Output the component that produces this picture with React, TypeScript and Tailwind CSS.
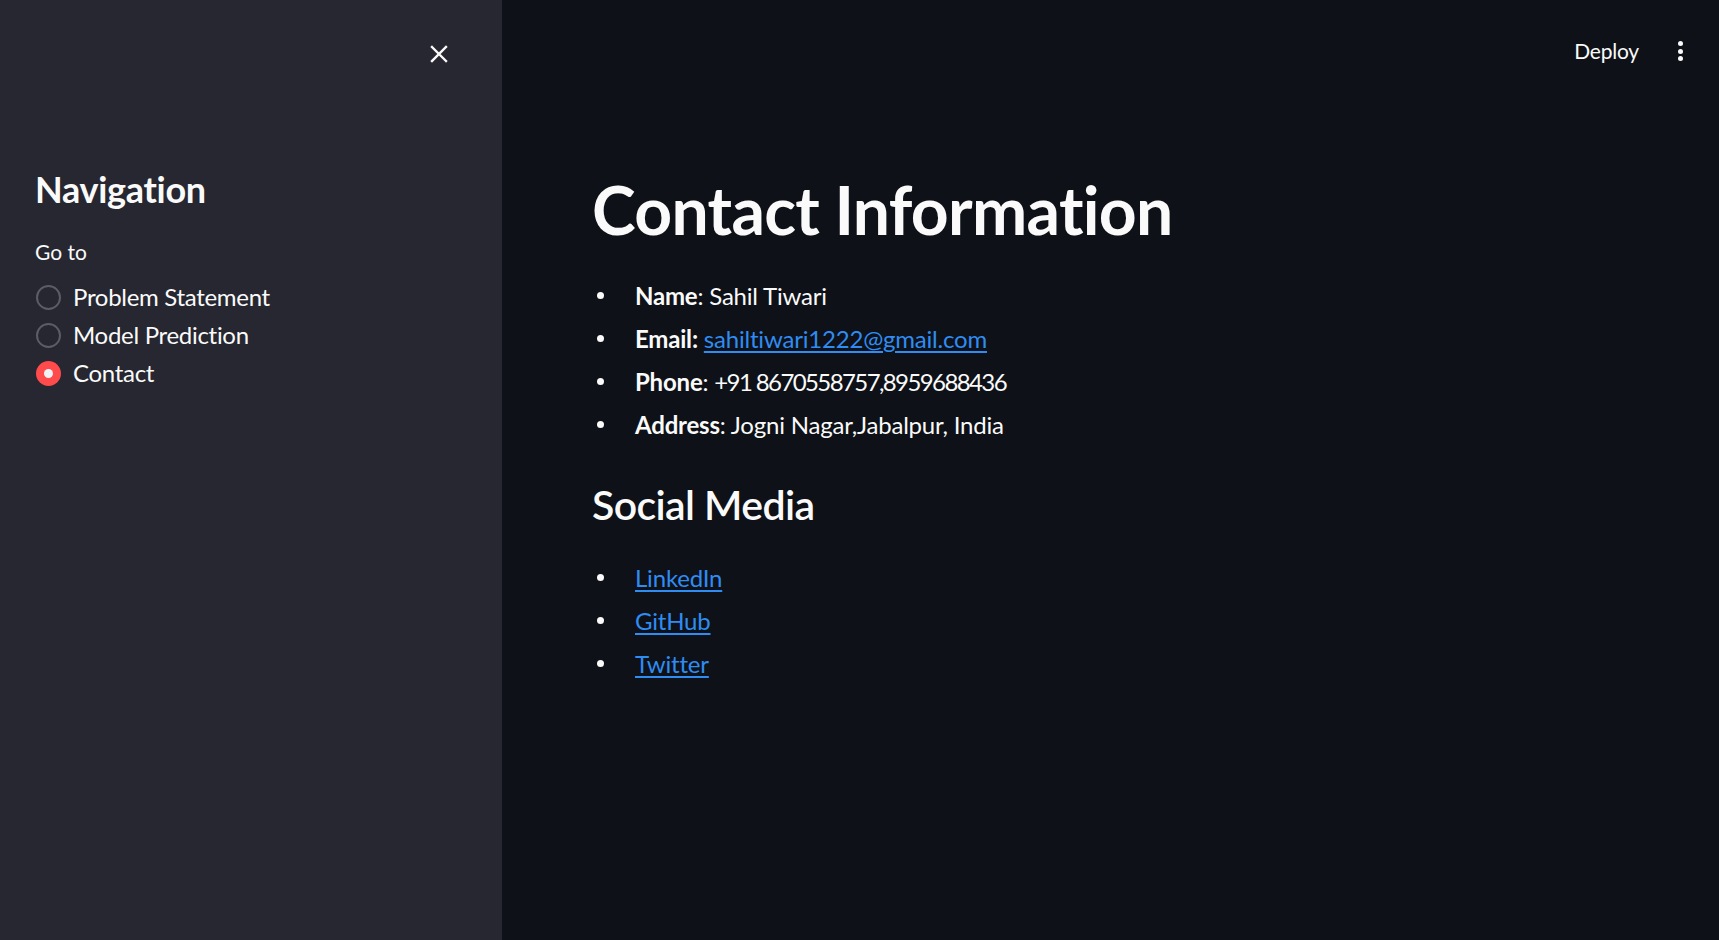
import React, { useState } from 'react';

const font = "font-['Lato','Noto_Sans',sans-serif]";

const pages = ['Problem Statement', 'Model Prediction', 'Contact'];

const Bullet: React.FC<{ children: React.ReactNode }> = ({ children }) => (
  <li className="flex items-center h-[43px]">
    <span className="w-[43px] shrink-0 flex pl-[5px]">
      <span className="w-[7px] h-[7px] rounded-full bg-[#fafafa]" />
    </span>
    <span className="text-[24px] leading-[43px] tracking-[-0.2px]">{children}</span>
  </li>
);

const Link: React.FC<{ children: React.ReactNode }> = ({ children }) => (
  <a href="#" className="text-[#2f8cf2] underline underline-offset-[3px] decoration-[1.5px]">
    {children}
  </a>
);

export default function App() {
  const [page, setPage] = useState('Contact');

  return (
    <div className={`flex h-[940px] w-full overflow-hidden text-[#fafafa] ${font}`}>
      {/* sidebar */}
      <aside className="w-[502px] shrink-0 bg-[#262730] flex flex-col">
        <div className="h-[108px] flex justify-end items-start pt-[45px] pr-[54px]">
          <button className="w-[18px] h-[18px] text-[#fafafa]">
            <svg viewBox="0 0 18 18" width="18" height="18" fill="none" stroke="currentColor" strokeWidth="2.4" strokeLinecap="square">
              <path d="M2 2 L16 16 M16 2 L2 16" />
            </svg>
          </button>
        </div>
        <div className="pl-[35px] pt-[59px]">
          <h2 className="text-[36px] leading-[44px] font-bold tracking-[-0.3px]">Navigation</h2>
          <div className="mt-[26px] text-[21px] leading-[30px]">Go to</div>
          <div className="mt-[11px] flex flex-col">
            {pages.map(p => {
              const active = p === page;
              return (
                <label key={p} onClick={() => setPage(p)} className="flex items-center h-[38px] cursor-pointer pl-[1px]">
                  <span
                    className={
                      active
                        ? 'w-[25px] h-[25px] rounded-full bg-[#ff4b4b] flex items-center justify-center'
                        : 'w-[25px] h-[25px] rounded-full border-2 border-[#5b5d66]'
                    }
                  >
                    {active && <span className="w-[9px] h-[9px] rounded-full bg-[#f0f2f6]" />}
                  </span>
                  <span className="ml-[12px] text-[24px] leading-[32px] tracking-[-0.3px]">{p}</span>
                </label>
              );
            })}
          </div>
        </div>
      </aside>

      {/* main */}
      <main className="flex-1 bg-[#0e1117] flex flex-col">
        <header className="h-[102px] flex items-center justify-end pr-[36px] gap-[39px]">
          <button className="text-[21px] leading-[30px] tracking-[-0.2px]">Deploy</button>
          <button className="flex flex-col gap-[2.5px] items-center">
            <span className="w-[5px] h-[5px] rounded-full bg-[#fafafa]" />
            <span className="w-[5px] h-[5px] rounded-full bg-[#fafafa]" />
            <span className="w-[5px] h-[5px] rounded-full bg-[#fafafa]" />
          </button>
        </header>

        <div className="pl-[90px] pt-[68px]">
          <h1 className="text-[66px] leading-[79px] font-bold tracking-[-0.7px]">Contact Information</h1>
          <ul className="mt-[25px]">
            <Bullet><b>Name</b>: Sahil Tiwari</Bullet>
            <Bullet><b>Email:</b> <Link>sahiltiwari1222@gmail.com</Link></Bullet>
            <Bullet>
              <b>Phone</b>: <span className="tracking-[-1.6px]">+91 8670558757,8959688436</span>
            </Bullet>
            <Bullet><b>Address</b>: Jogni Nagar,Jabalpur, India</Bullet>
          </ul>

          <h3 className="mt-[34px] text-[41px] leading-[50px] font-semibold tracking-[-0.6px]">Social Media</h3>
          <ul className="mt-[26px]">
            <Bullet><Link>LinkedIn</Link></Bullet>
            <Bullet><Link>GitHub</Link></Bullet>
            <Bullet><Link>Twitter</Link></Bullet>
          </ul>
        </div>
      </main>
    </div>
  );
}
